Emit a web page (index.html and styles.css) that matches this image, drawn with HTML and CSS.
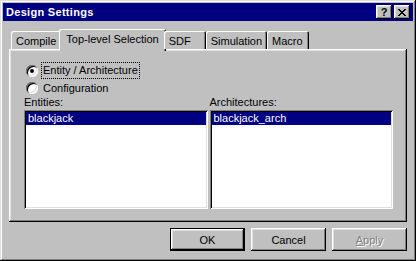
FILE: index.html
```html
<!DOCTYPE html>
<html>

<head>
    <title>Design Settings</title>
    <link rel="stylesheet" href="styles.css">
</head>

<body>
    <div class="window">
        <div class="titlebar">
            <span class="title">Design Settings</span>
            <div class="title-buttons">
                <button class="tbtn help">?</button>
                <button class="tbtn close">
                    <svg width="8" height="7" viewBox="0 0 8 7" shape-rendering="crispEdges">
                        <rect x="0" y="0" width="2" height="1" />
                        <rect x="6" y="0" width="2" height="1" />
                        <rect x="1" y="1" width="2" height="1" />
                        <rect x="5" y="1" width="2" height="1" />
                        <rect x="2" y="2" width="4" height="1" />
                        <rect x="3" y="3" width="2" height="1" />
                        <rect x="2" y="4" width="4" height="1" />
                        <rect x="1" y="5" width="2" height="1" />
                        <rect x="5" y="5" width="2" height="1" />
                        <rect x="0" y="6" width="2" height="1" />
                        <rect x="6" y="6" width="2" height="1" />
                    </svg>
                </button>
            </div>
        </div>

        <div class="content">
            <div class="tabs">
                <div class="tab">Compile</div>
                <div class="tab active">Top-level Selection</div>
                <div class="tab">SDF</div>
                <div class="tab">Simulation</div>
                <div class="tab">Macro</div>
            </div>

            <div class="panel">
                <div class="radios">
                    <div class="radio-row">
                        <span class="radio checked"></span>
                        <span class="focus">Entity / Architecture</span>
                    </div>
                    <div class="radio-row">
                        <span class="radio"></span>
                        <span class="radio-text">Configuration</span>
                    </div>
                </div>

                <div class="lists">
                    <div class="list-col">
                        <div class="list-label">Entities:</div>
                        <div class="listbox">
                            <div class="item selected">blackjack</div>
                        </div>
                    </div>
                    <div class="list-col">
                        <div class="list-label">Architectures:</div>
                        <div class="listbox">
                            <div class="item selected">blackjack_arch</div>
                        </div>
                    </div>
                </div>
            </div>

            <div class="actions">
                <button class="btn default">OK</button>
                <button class="btn">Cancel</button>
                <button class="btn disabled"><u>A</u>pply</button>
            </div>
        </div>
    </div>
</body>

</html>
```

FILE: styles.css
```css
body {
    margin: 0;
    font-family: "Liberation Sans", Arial, sans-serif;
    font-size: 11px;
    color: #000;
    background-color: #c0c0c0;
}

.window {
    display: flex;
    flex-direction: column;
    width: 416px;
    height: 261px;
    box-sizing: border-box;
    padding: 3px;
    background-color: #c0c0c0;
    box-shadow: inset -1px -1px #000, inset 1px 1px #dfdfdf, inset -2px -2px #808080, inset 2px 2px #fff;
}

/* Title bar */
.titlebar {
    display: flex;
    align-items: center;
    justify-content: space-between;
    height: 18px;
    padding: 0 3px 0 3px;
    background-color: #000080;
}

.title {
    color: #fff;
    font-weight: bold;
    font-size: 11px;
    letter-spacing: 0.3px;
}

.title-buttons {
    display: flex;
    gap: 2px;
}

.tbtn {
    display: flex;
    align-items: center;
    justify-content: center;
    width: 16px;
    height: 14px;
    padding: 0;
    border: none;
    background-color: #c0c0c0;
    font-family: "Liberation Sans", Arial, sans-serif;
    font-size: 11px;
    font-weight: bold;
    color: #000;
    box-shadow: inset -1px -1px #000, inset 1px 1px #fff, inset -2px -2px #808080, inset 2px 2px #dfdfdf;
}

.tbtn svg {
    fill: #000;
}

/* Tabs */
.content {
    display: flex;
    flex-direction: column;
    flex: 1;
    padding: 8px 6px 7px 6px;
}

.tabs {
    position: relative;
    z-index: 1;
    display: flex;
    align-items: flex-end;
    height: 20px;
    padding-left: 2px;
}

.tab {
    min-width: 42px;
    height: 18px;
    line-height: 18px;
    padding: 1px 5px 0 5px;
    box-sizing: border-box;
    border-radius: 2px 2px 0 0;
    background-color: #c0c0c0;
    box-shadow: inset 1px 1px #fff, inset -1px 0 #000, inset -2px 0 #808080;
    white-space: nowrap;
}

.tab.active {
    height: 22px;
    line-height: 18px;
    padding: 1px 7px 0 7px;
    margin: 0 -2px -2px -2px;
}

.panel {
    display: flex;
    flex-direction: column;
    flex: 1;
    padding: 13px 14px 13px 15px;
    box-shadow: inset -1px -1px #000, inset 1px 1px #fff, inset -2px -2px #808080, inset 2px 2px #dfdfdf;
}

/* Radio buttons */
.radios {
    display: flex;
    flex-direction: column;
    padding-left: 2px;
}

.radio-row {
    display: flex;
    align-items: center;
    height: 17px;
}

.radio {
    position: relative;
    width: 12px;
    height: 12px;
    margin-right: 3px;
    border-radius: 50%;
    background-color: #fff;
    box-shadow: inset 1px 1px #808080, inset -1px -1px #fff, inset 2px 2px #000, inset -2px -2px #dfdfdf;
}

.radio.checked::after {
    content: "";
    position: absolute;
    top: 4px;
    left: 4px;
    width: 4px;
    height: 4px;
    border-radius: 50%;
    background-color: #000;
}

.focus {
    padding: 1px 1px;
    border: 1px dotted #000;
    line-height: 13px;
}

.radio-text {
    padding-left: 2px;
}

/* Lists */
.lists {
    display: flex;
    flex: 1;
    gap: 2px;
}

.list-col {
    display: flex;
    flex-direction: column;
    flex: 1;
}

.list-label {
    height: 13px;
    line-height: 13px;
    margin-bottom: 1px;
}

.listbox {
    flex: 1;
    padding: 2px;
    background-color: #fff;
    box-shadow: inset 1px 1px #808080, inset -1px -1px #fff, inset 2px 2px #000, inset -2px -2px #dfdfdf;
}

.item {
    height: 13px;
    line-height: 13px;
    padding: 0 2px;
}

.item.selected {
    background-color: #000080;
    color: #fff;
}

/* Dialog buttons */
.actions {
    display: flex;
    justify-content: flex-end;
    gap: 6px;
    margin-top: 6px;
}

.btn {
    width: 75px;
    height: 23px;
    padding: 0;
    border: none;
    background-color: #c0c0c0;
    font-family: "Liberation Sans", Arial, sans-serif;
    font-size: 11px;
    color: #000;
    box-shadow: inset -1px -1px #000, inset 1px 1px #fff, inset -2px -2px #808080, inset 2px 2px #dfdfdf;
}

.btn.default {
    box-shadow: inset 0 0 0 1px #000, inset -2px -2px #000, inset 2px 2px #fff, inset -3px -3px #808080, inset 3px 3px #dfdfdf;
}

.btn.disabled {
    color: #808080;
    text-shadow: 1px 1px #fff;
}
```
